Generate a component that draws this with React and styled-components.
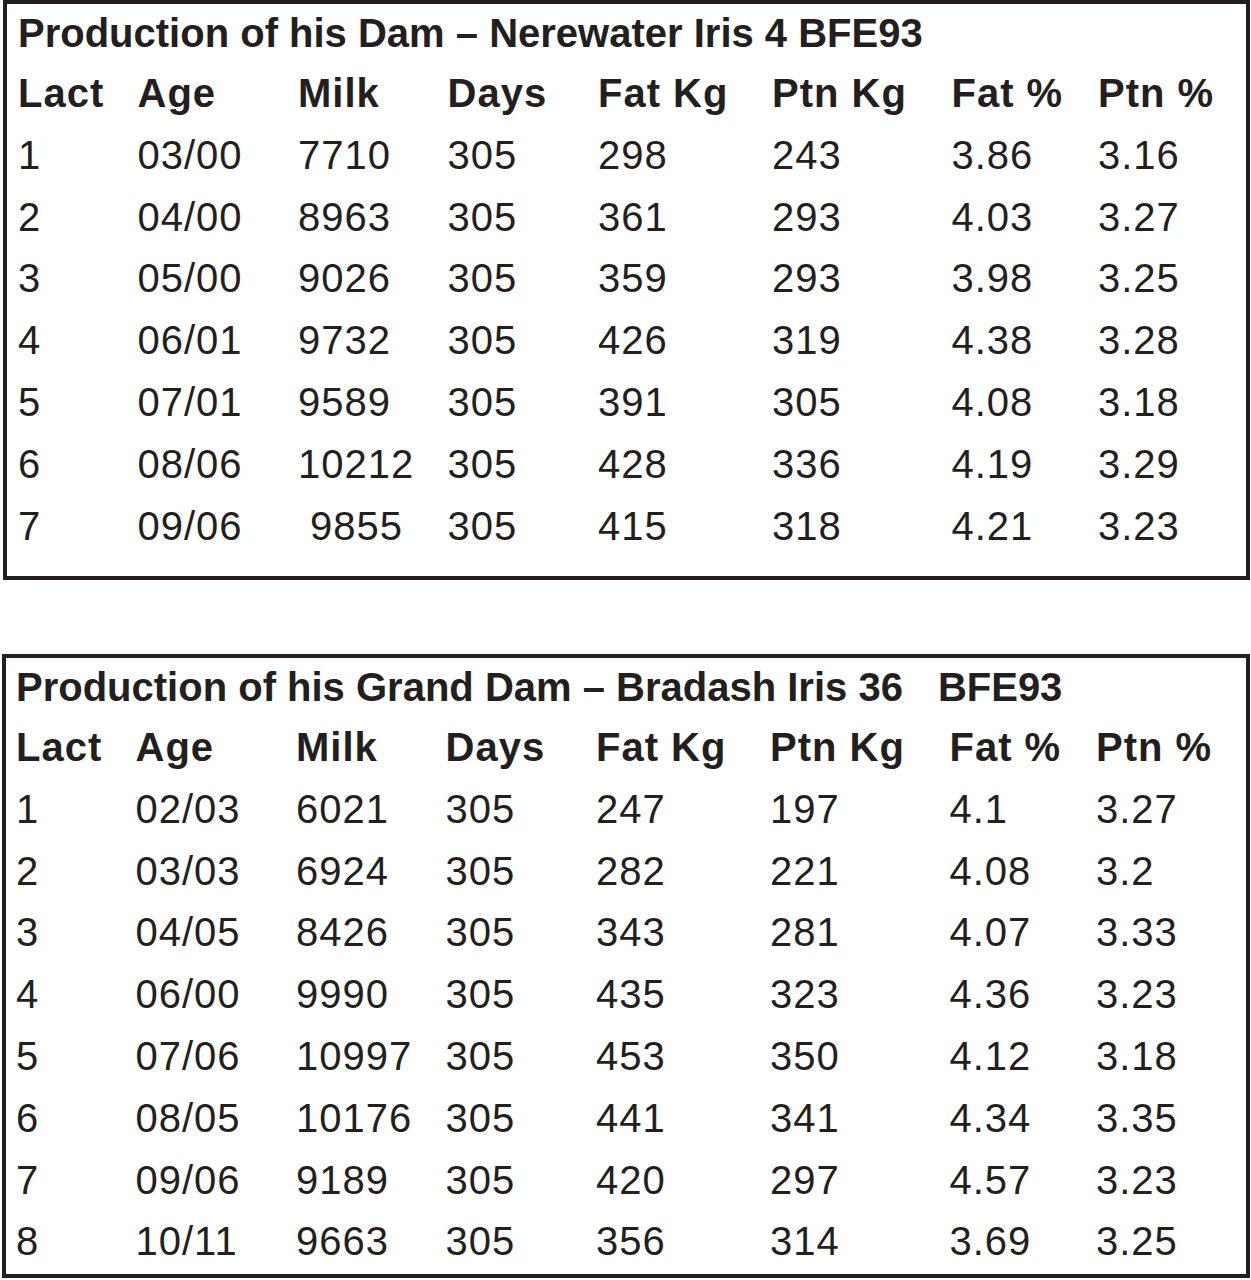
import React from "react";
import styled, { createGlobalStyle } from "styled-components";

const Global = createGlobalStyle`
  html, body { margin: 0; padding: 0; background: #ffffff; }
  body { font-family: "Liberation Sans", Arial, sans-serif; color: #231f20; }
`;

const Page = styled.div`
  display: flex;
  flex-direction: column;
  gap: 74px;
  width: 1251px;
`;

const Box = styled.section`
  box-sizing: border-box;
  margin-left: ${(p) => p.$left}px;
  width: ${(p) => 1250 - p.$left}px;
  border: 4px solid #231f20;
  padding: 0 0 ${(p) => p.$bottom}px ${(p) => p.$pad}px;
`;

const Title = styled.h2`
  margin: 0;
  font-size: 40px;
  font-weight: 700;
  line-height: 59px;
  white-space: pre;
`;

const Spacer = styled.span`
  display: inline-block;
  width: 35px;
`;

const Grid = styled.div`
  display: grid;
  grid-template-columns: 119.5px 160.5px 149.5px 150.5px 174px 179.5px 146.5px 1fr;
`;

const Cell = styled.div`
  font-size: 40px;
  letter-spacing: 1px;
  line-height: 61.8px;
  height: 61.8px;
  font-weight: ${(p) => (p.$head ? 700 : 400)};
  white-space: pre;
`;

const headers = ["Lact", "Age", "Milk", "Days", "Fat Kg", "Ptn Kg", "Fat %", "Ptn %"];

const dam = [
  ["1", "03/00", "7710", "305", "298", "243", "3.86", "3.16"],
  ["2", "04/00", "8963", "305", "361", "293", "4.03", "3.27"],
  ["3", "05/00", "9026", "305", "359", "293", "3.98", "3.25"],
  ["4", "06/01", "9732", "305", "426", "319", "4.38", "3.28"],
  ["5", "07/01", "9589", "305", "391", "305", "4.08", "3.18"],
  ["6", "08/06", "10212", "305", "428", "336", "4.19", "3.29"],
  ["7", "09/06", " 9855", "305", "415", "318", "4.21", "3.23"],
];

const grandDam = [
  ["1", "02/03", "6021", "305", "247", "197", "4.1", "3.27"],
  ["2", "03/03", "6924", "305", "282", "221", "4.08", "3.2"],
  ["3", "04/05", "8426", "305", "343", "281", "4.07", "3.33"],
  ["4", "06/00", "9990", "305", "435", "323", "4.36", "3.23"],
  ["5", "07/06", "10997", "305", "453", "350", "4.12", "3.18"],
  ["6", "08/05", "10176", "305", "441", "341", "4.34", "3.35"],
  ["7", "09/06", "9189", "305", "420", "297", "4.57", "3.23"],
  ["8", "10/11", "9663", "305", "356", "314", "3.69", "3.25"],
];

function ProductionTable({ title, rows, left, pad, bottom }) {
  return (
    <Box $left={left} $pad={pad} $bottom={bottom}>
      <Title>{title}</Title>
      <Grid>
        {headers.map((h) => (
          <Cell key={h} $head>
            {h}
          </Cell>
        ))}
        {rows.map((r, i) =>
          r.map((v, j) => <Cell key={`${i}-${j}`}>{v}</Cell>)
        )}
      </Grid>
    </Box>
  );
}

export default function App() {
  return (
    <>
      <Global />
      <Page>
        <ProductionTable
          title="Production of his Dam – Nerewater Iris 4 BFE93"
          rows={dam}
          left={3}
          pad={11}
          bottom={18.6}
        />
        <ProductionTable
          title={
            <>
              Production of his Grand Dam – Bradash Iris 36<Spacer />BFE93
            </>
          }
          rows={grandDam}
          left={2}
          pad={10}
          bottom={0.8}
        />
      </Page>
    </>
  );
}
